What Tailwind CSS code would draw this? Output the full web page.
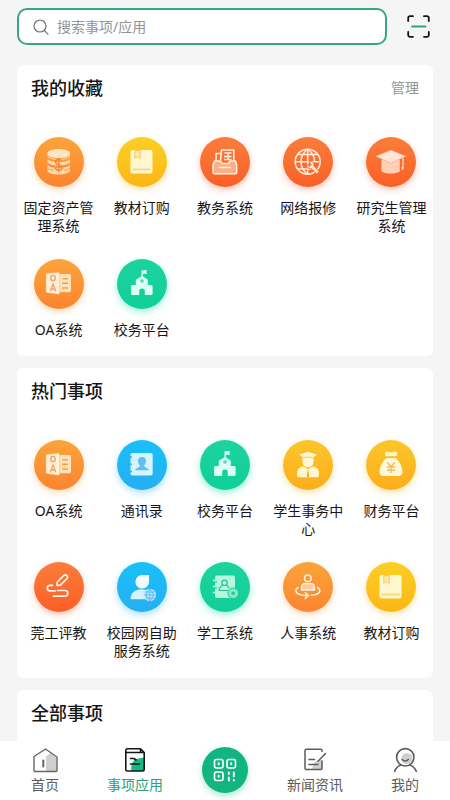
<!DOCTYPE html>
<html lang="zh-CN">
<head>
    <meta charset="UTF-8">
    <meta name="viewport" content="width=device-width, initial-scale=1.0">
    <title>事项应用</title>
    <script src="https://cdn.jsdelivr.net/npm/@tailwindcss/browser@4"></script>
</head>
<body class="flex flex-col min-h-screen bg-[#f5f5f6] text-[#161616] font-['Noto_Sans','Noto_Sans_CJK_SC',sans-serif]">

    <!-- Search bar -->
    <header class="flex items-center justify-between gap-5 pt-2 pb-5 pl-[17px] pr-5">
        <label class="flex flex-1 items-center h-[37px] gap-2 px-[14px] bg-white border-2 border-[#3aa582] rounded-[10px]">
            <svg class="size-4 shrink-0" viewBox="0 0 16 16" fill="none" stroke="#707070" stroke-width="1.2" stroke-linecap="round"><circle cx="7" cy="7" r="6"/><path d="M11.4 11.6 15 15.2"/></svg>
            <input type="search" aria-label="搜索事项/应用" placeholder="搜索事项/应用" class="w-full min-w-0 text-sm outline-none placeholder:text-[#949494]">
        </label>
        <button type="button" aria-label="扫一扫" class="size-[23px] shrink-0">
            <svg viewBox="0 0 23 23" fill="none" stroke="#161616" stroke-width="1.8" stroke-linecap="round"><path d="M6 1.2H3a1.8 1.8 0 0 0-1.8 1.8v3M17 1.2h3A1.8 1.8 0 0 1 21.8 3v3M6 21.8H3A1.8 1.8 0 0 1 1.2 20v-3M17 21.8h3a1.8 1.8 0 0 0 1.8-1.8v-3"/><path d="M5 11.5h13.500" stroke="#2fa37c"/></svg>
        </button>
    </header>

    <main class="flex flex-col flex-1 gap-3 px-[17px]">
        <!-- Favourites -->
        <section class="pt-3 pb-[17px] bg-white rounded-md">
            <div class="flex items-center justify-between px-[14px] mb-[38px]">
                <h2 class="text-lg leading-[22px] font-medium">我的收藏</h2>
                <button type="button" class="text-sm leading-[22px] text-[#949494]">管理</button>
            </div>
            <div class="grid grid-cols-5 gap-y-6 text-sm leading-[18px] text-center">
                <a href="#" class="flex flex-col items-center gap-3 px-1.5">
                    <span class="size-[50px] rounded-full bg-linear-to-b from-[#fba43a] to-[#fb8430] shadow-[0_3px_7px_#fb943055]"><svg viewBox="0 0 50 50"><use href="#icon-coins"/></svg></span>
                    <span>固定资产管理系统</span>
                </a>
                <a href="#" class="flex flex-col items-center gap-3 px-1.5">
                    <span class="size-[50px] rounded-full bg-linear-to-b from-[#fbd025] to-[#fdb514] shadow-[0_3px_7px_#fdb51455]"><svg viewBox="0 0 50 50"><use href="#icon-book"/></svg></span>
                    <span>教材订购</span>
                </a>
                <a href="#" class="flex flex-col items-center gap-3 px-1.5">
                    <span class="size-[50px] rounded-full bg-linear-to-b from-[#fa7d3b] to-[#fb5e26] shadow-[0_3px_7px_#fb5e2655]"><svg viewBox="0 0 50 50"><use href="#icon-drawer"/></svg></span>
                    <span>教务系统</span>
                </a>
                <a href="#" class="flex flex-col items-center gap-3 px-1.5">
                    <span class="size-[50px] rounded-full bg-linear-to-b from-[#fa7d3b] to-[#fb5e26] shadow-[0_3px_7px_#fb5e2655]"><svg viewBox="0 0 50 50"><use href="#icon-network"/></svg></span>
                    <span>网络报修</span>
                </a>
                <a href="#" class="flex flex-col items-center gap-3 px-1.5">
                    <span class="size-[50px] rounded-full bg-linear-to-b from-[#fa7d3b] to-[#fb5e26] shadow-[0_3px_7px_#fb5e2655]"><svg viewBox="0 0 50 50"><use href="#icon-cap"/></svg></span>
                    <span>研究生管理系统</span>
                </a>
                <a href="#" class="flex flex-col items-center gap-3 px-1.5">
                    <span class="size-[50px] rounded-full bg-linear-to-b from-[#fba43a] to-[#fb8430] shadow-[0_3px_7px_#fb943055]"><svg viewBox="0 0 50 50"><use href="#icon-oa"/></svg></span>
                    <span>OA系统</span>
                </a>
                <a href="#" class="flex flex-col items-center gap-3 px-1.5">
                    <span class="size-[50px] rounded-full bg-linear-to-b from-[#1cd3a0] to-[#10cf98] shadow-[0_3px_7px_#10dfa866]"><svg viewBox="0 0 50 50"><use href="#icon-school"/></svg></span>
                    <span>校务平台</span>
                </a>
            </div>
        </section>

        <!-- Popular -->
        <section class="pt-3 pb-[18px] bg-white rounded-md">
            <h2 class="px-[14px] mb-[38px] text-lg leading-[22px] font-medium">热门事项</h2>
            <div class="grid grid-cols-5 gap-y-6 text-sm leading-[18px] text-center">
                <a href="#" class="flex flex-col items-center gap-3 px-1.5">
                    <span class="size-[50px] rounded-full bg-linear-to-b from-[#fba43a] to-[#fb8430] shadow-[0_3px_7px_#fb943055]"><svg viewBox="0 0 50 50"><use href="#icon-oa"/></svg></span>
                    <span>OA系统</span>
                </a>
                <a href="#" class="flex flex-col items-center gap-3 px-1.5">
                    <span class="size-[50px] rounded-full bg-linear-to-b from-[#16c1f8] to-[#27aef0] shadow-[0_3px_7px_#27b8f066]"><svg viewBox="0 0 50 50"><use href="#icon-contacts"/></svg></span>
                    <span>通讯录</span>
                </a>
                <a href="#" class="flex flex-col items-center gap-3 px-1.5">
                    <span class="size-[50px] rounded-full bg-linear-to-b from-[#1cd3a0] to-[#10cf98] shadow-[0_3px_7px_#10dfa866]"><svg viewBox="0 0 50 50"><use href="#icon-school"/></svg></span>
                    <span>校务平台</span>
                </a>
                <a href="#" class="flex flex-col items-center gap-3 px-1.5">
                    <span class="size-[50px] rounded-full bg-linear-to-b from-[#fbc62a] to-[#fdad1c] shadow-[0_3px_7px_#fdb51455]"><svg viewBox="0 0 50 50"><use href="#icon-graduate"/></svg></span>
                    <span>学生事务中心</span>
                </a>
                <a href="#" class="flex flex-col items-center gap-3 px-1.5">
                    <span class="size-[50px] rounded-full bg-linear-to-b from-[#fbc62a] to-[#fdad1c] shadow-[0_3px_7px_#fdb51455]"><svg viewBox="0 0 50 50"><use href="#icon-money"/></svg></span>
                    <span>财务平台</span>
                </a>
                <a href="#" class="flex flex-col items-center gap-3 px-1.5">
                    <span class="size-[50px] rounded-full bg-linear-to-b from-[#fa7d3b] to-[#fb5e26] shadow-[0_3px_7px_#fb5e2655]"><svg viewBox="0 0 50 50"><use href="#icon-pen"/></svg></span>
                    <span>莞工评教</span>
                </a>
                <a href="#" class="flex flex-col items-center gap-3 px-1.5">
                    <span class="size-[50px] rounded-full bg-linear-to-b from-[#16c1f8] to-[#27aef0] shadow-[0_3px_7px_#27b8f066]"><svg viewBox="0 0 50 50"><use href="#icon-netuser"/></svg></span>
                    <span>校园网自助服务系统</span>
                </a>
                <a href="#" class="flex flex-col items-center gap-3 px-1.5">
                    <span class="size-[50px] rounded-full bg-linear-to-b from-[#1cd3a0] to-[#10cf98] shadow-[0_3px_7px_#10dfa866]"><svg viewBox="0 0 50 50"><use href="#icon-student"/></svg></span>
                    <span>学工系统</span>
                </a>
                <a href="#" class="flex flex-col items-center gap-3 px-1.5">
                    <span class="size-[50px] rounded-full bg-linear-to-b from-[#fba43a] to-[#fb8430] shadow-[0_3px_7px_#fb943055]"><svg viewBox="0 0 50 50"><use href="#icon-staff"/></svg></span>
                    <span>人事系统</span>
                </a>
                <a href="#" class="flex flex-col items-center gap-3 px-1.5">
                    <span class="size-[50px] rounded-full bg-linear-to-b from-[#fbd025] to-[#fdb514] shadow-[0_3px_7px_#fdb51455]"><svg viewBox="0 0 50 50"><use href="#icon-book"/></svg></span>
                    <span>教材订购</span>
                </a>
            </div>
        </section>

        <!-- All -->
        <section class="flex-1 pt-3 bg-white rounded-t-md">
            <h2 class="px-[14px] text-lg leading-[22px] font-medium">全部事项</h2>
        </section>
    </main>

    <!-- Tab bar -->
    <nav class="grid grid-cols-5 justify-items-center pt-1.5 pb-1.5 bg-white text-sm leading-[18px] text-[#5c5c5c]">
        <a href="#" class="flex flex-col items-center gap-[3px]">
            <svg class="size-[26px]" viewBox="0 0 26 26" fill="none" stroke="#666" stroke-width="1.4" stroke-linejoin="round" stroke-linecap="round"><path d="M14 24.500V9.500l4.500-3.500 6 5v13.500z" fill="#cfcfcf" stroke="none"/><path d="M2 9.500 13.500 2l11.500 8v13.500a1 1 0 0 1-1 1H3a1 1 0 0 1-1-1z"/><path d="M11.300 13.500v6" stroke-width="2"/></svg>
            <span>首页</span>
        </a>
        <a href="#" aria-current="page" class="flex flex-col items-center gap-[3px] text-[#2c9f78]">
            <svg class="size-[26px]" viewBox="0 0 26 26" fill="none" stroke="#161616" stroke-width="1.6" stroke-linejoin="round" stroke-linecap="round"><path d="M9.500 24c-1-5 1-12 7-12.500 2-.3 4-1 5.500-.5v13z" fill="#15b982" stroke="none"/><path d="M3.800 5.500V3.500A1.800 1.800 0 0 1 5.600 1.800H18.500l3.700 3.700v17a1.500 1.500 0 0 1-1.500 1.500H5.300a1.500 1.500 0 0 1-1.500-1.500zH18M18.500 1.800v3.700h3.700"/><path d="M8.500 11.500h3.500M8.500 17h9M12 11.500l2 1.500"/></svg>
            <span>事项应用</span>
        </a>
        <button type="button" aria-label="二维码" class="flex items-center justify-center size-[46px] rounded-full bg-[#12b580] shadow-[0_3px_6px_#12b58055]">
            <svg class="size-6" viewBox="0 0 24 24" fill="none" stroke="#fff" stroke-width="1.600" stroke-linecap="round"><rect x="1.500" y="1.500" width="8.500" height="8.500" rx="2"/><rect x="14" y="1.500" width="8.500" height="8.500" rx="2"/><rect x="1.500" y="14" width="8.500" height="8.500" rx="2"/><path d="M5.700 5.200v1M18.200 5.200v1M5.700 17.700v1" stroke-width="2"/><path d="M15.800 14.500v1.500M15.800 19.500v3M20.800 14.500v4M20.800 22v.5" stroke-width="1.900"/></svg>
        </button>
        <a href="#" class="flex flex-col items-center gap-[3px]">
            <svg class="size-[26px]" viewBox="0 0 26 26" fill="none" stroke="#5c5c5c" stroke-width="1.500" stroke-linejoin="round" stroke-linecap="round"><path d="M10.500 22.500c0-6 2-9.500 9.500-9.500v9.500z" fill="#cfcfcf" stroke="none"/><path d="M20 4.500V3.500a1.300 1.300 0 0 0-1.300-1.300H4.300A1.300 1.300 0 0 0 3 3.500v17.700a1.300 1.300 0 0 0 1.300 1.300h14.400a1.300 1.300 0 0 0 1.300-1.300V14"/><path d="M23.500 6.500 16 14.300M7 12.500h5.500M7 17.500h9"/></svg>
            <span>新闻资讯</span>
        </a>
        <a href="#" class="flex flex-col items-center gap-[3px]">
            <svg class="size-[26px]" viewBox="0 0 26 26" fill="none" stroke="#5c5c5c" stroke-width="1.600" stroke-linecap="round"><circle cx="15" cy="11.500" r="5.500" fill="#cfcfcf" stroke="none"/><circle cx="13.300" cy="10.300" r="8.700"/><path d="M10.200 12.500c1.500 2 4.500 2 6 0M2.500 24.300c1.500-3.300 4-5.500 6.500-6.300M24.300 24.300c-1.500-3.300-4-5.500-6.500-6.300"/></svg>
            <span>我的</span>
        </a>
    </nav>

    <!-- Icon sprite -->
    <svg class="absolute size-0" aria-hidden="true">
        <symbol id="icon-coins" viewBox="0 0 50 50">
            <path d="M13.500 16c0-2.300 5-4 11.200-4S36 13.700 36 16v3c0 2.300-5 4-11.300 4s-11.200-1.700-11.200-4z" fill="#ffe5bf"/>
            <path d="M13.500 22c1.500 2 6 3 11.200 3S34.500 24 36 22v3.500c-1.500 2-6 3-11.300 3s-9.700-1-11.200-3zM13.500 28c1.500 2 6 3 11.200 3S34.500 30 36 28v6c-1 2-6 3.500-11.300 3.500S14.500 36 13.500 34z" fill="#ffd9ac"/>
            <path d="M13.500 18.500c2 2 6 3.300 11.200 3.300S34 20.500 36 18.500M13.500 31c1 1.300 4 2 6 2.300M36 31c-1 1.300-4 2-6 2.300" fill="none" stroke="#fa9848"/>
            <path d="M28 24.300c-.5-1.500-1.800-2-3.200-2-2 0-3.300 1-3.300 2.700 0 4 6.700 1.800 6.700 5.500 0 1.700-1.500 2.800-3.500 2.800-1.700 0-3-.7-3.500-2.300M24.800 20.800v14" fill="none" stroke="#f58a38" stroke-width="1.500"/>
        </symbol>
        <symbol id="icon-book" viewBox="0 0 50 50">
            <path d="M16 13h17.500a2 2 0 0 1 2 2v19.500a2 2 0 0 1-2 2h-18a2 2 0 0 1-2-2v-19A2.500 2.500 0 0 1 16 13z" fill="#fff8cf"/>
            <path d="M17.800 13.500h5.400v8l-2.700-2.200-2.700 2.200z" fill="#ffe9a0" stroke="#f6c968"/>
            <path d="M15.500 32.500h18.500" stroke="#f9d580" stroke-width="1.800"/>
        </symbol>
        <symbol id="icon-drawer" viewBox="0 0 50 50">
            <g fill="none" stroke="#fff0e4" stroke-width="1.500" stroke-linejoin="round">
                <path d="M20.500 23.500 21.500 13h12.300v11M16 24v-7.500h5"/>
                <path d="M24.500 16h7M24 19.500h7.500M24 22.500h7.500M28 16v7"/>
                <path d="M14.500 24h6l1.500 2.500h6.500l1.500-2.500h5.500l1.200 4v7.200a1.600 1.600 0 0 1-1.600 1.600H14.600a1.600 1.600 0 0 1-1.600-1.600V28z" fill="#fcae86"/>
                <path d="M18.500 30.500H31"/>
            </g>
        </symbol>
        <symbol id="icon-network" viewBox="0 0 50 50">
            <g fill="none" stroke="#ffeddc" stroke-width="1.500">
                <circle cx="24.700" cy="24.700" r="12.500"/>
                <path d="M24.700 12v25.500M12.500 24.700H37M14.500 17.500h20.400M14.500 32h14M24.700 12c-9 7-9 18.500 0 25.500M24.700 12c5 4 7 8 6.800 12"/>
            </g>
            <path d="M25.800 24.500c3-.7 5.600 1.300 5 4.300l5.300 5.700-2.300 2.500-5.500-5.500c-2.500.6-5-1.500-4.300-4.300l2.500 2.200 1.700-1.800z" fill="#ffe0cc" stroke="#fb6e34" stroke-width=".8"/>
        </symbol>
        <symbol id="icon-cap" viewBox="0 0 50 50">
            <path d="M15.500 22.500h18.300v12c-5 2.700-13.300 2.700-18.300 0z" fill="#ffd0b6"/>
            <path d="M9.500 19.300 25 13l15 6.300-15.300 6.900z" fill="#ffe7d8" stroke="#fb9365" stroke-width=".5"/>
            <path d="M37 20.800v11M36.300 30v3" stroke="#ffe0cf" stroke-width="1.200"/>
        </symbol>
        <symbol id="icon-oa" viewBox="0 0 50 50">
            <path d="M24 15h11.200a1.800 1.800 0 0 1 1.800 1.800v14.700a1.800 1.800 0 0 1-1.800 1.800H24z" fill="#ffe3bd"/>
            <path d="M13.200 14.300 24 13.200a1.500 1.500 0 0 1 1.700 1.500v19a1.500 1.500 0 0 1-1.700 1.500l-10.800-1.400a1.500 1.500 0 0 1-1.300-1.500V15.800a1.500 1.500 0 0 1 1.300-1.500z" fill="#fff0da" stroke="#fca94f" stroke-width=".5"/>
            <path d="M28.500 19.700H34M28 24.300h6M28 28.900h6" stroke="#fb9d45" stroke-width="1.500"/>
            <g fill="none" stroke="#f5a05b" stroke-width="1.300"><ellipse cx="19" cy="19" rx="2.300" ry="2.700"/><path d="m16.200 32.300 2.800-7.300 2.800 7.300M17.200 30h3.600"/></g>
        </symbol>
        <symbol id="icon-school" viewBox="0 0 50 50">
            <path d="M24.500 11.200h5.700l-1 1.700 1 1.800h-4.400v2.500l5 3.500v5.200h3.300a1.500 1.500 0 0 1 1.500 1.500v7.200a1.500 1.500 0 0 1-1.500 1.500h-6.300v-3.700a2.800 2.800 0 0 0-5.600 0v3.700h-6.700a1.500 1.500 0 0 1-1.500-1.500v-7.200a1.500 1.500 0 0 1 1.500-1.500h3.300v-5.200l5.700-3.500z" fill="#dcfff5"/>
            <circle cx="25" cy="22" r="1.800" fill="#54d9b8"/>
        </symbol>
        <symbol id="icon-contacts" viewBox="0 0 50 50">
            <rect x="13.500" y="13" width="22.200" height="22.500" rx="2" fill="#d5f4ff"/>
            <path d="M12.500 17h2.500M12.500 24.200h2.500M12.500 31.500h2.500" stroke="#27b7f3" stroke-width="1.500"/>
            <path d="M25 17c2.800 0 4.200 2 4 4.200-.1 1.800-1 3.300-2 4.300.2 2.300 4 2 5 4.700H18c1-2.700 4.800-2.400 5-4.700-1-1-1.900-2.500-2-4.300-.2-2.200 1.200-4.200 4-4.200z" fill="#64bfe9"/>
        </symbol>
        <symbol id="icon-graduate" viewBox="0 0 50 50">
            <path d="M15.700 14.800 25 11.800l9.300 3-3.800 1.900v5c0 3.300-2.500 5.600-5.500 5.600s-5.500-2.300-5.500-5.600v-5z" fill="#fff7d6"/>
            <path d="M19.500 18.200c2.500-1.500 8.500-1.500 11 0M16.800 15.500v4" fill="none" stroke="#f8bd4a" stroke-width=".9"/>
            <path d="m20 26.200 5 3 5-3c4 .8 6 3.500 6 7.600v1.700a1.700 1.700 0 0 1-1.700 1.700H15.700a1.700 1.700 0 0 1-1.700-1.700v-1.700c0-4.100 2-6.800 6-7.600z" fill="#fff5ce"/>
            <path d="m25 29-1.300 7.800h2.600z" fill="#f1a724"/>
        </symbol>
        <symbol id="icon-money" viewBox="0 0 50 50">
            <path d="M20 16.300c-2-2-1.300-4.800 1.300-4.800 1.400 0 2.300.8 3.700.8s2.500-.8 4-.8c2.700 0 3.200 2.800 1.200 4.800z" fill="#fff3c4"/>
            <path d="M20.500 18h9c4 3 7 9 7 14.300 0 2.400-1.400 3.700-4 3.700h-15c-2.600 0-4-1.300-4-3.700C13.500 27 16.500 21 20.500 18z" fill="#fff8d6"/>
            <path d="m21.300 22.500 3.700 4.300 3.700-4.300M25 26.800V33M20.800 27h8.400M20.800 30h8.400" fill="none" stroke="#efbb5b" stroke-width="1.400"/>
        </symbol>
        <symbol id="icon-pen" viewBox="0 0 50 50">
            <g fill="none" stroke="#fff3ea" stroke-width="1.700" stroke-linecap="round" stroke-linejoin="round">
                <path d="m22.800 23.300.5-3.300 6.500-6.400a2.200 2.200 0 0 1 3.200 3l-6.700 6.500z"/>
                <path d="M18.500 23.300h-3a2.800 2.800 0 0 0 0 5.500h5.800M23.500 28.500H31a2.800 2.800 0 0 1 0 5.600H19.500"/>
            </g>
        </symbol>
        <symbol id="icon-netuser" viewBox="0 0 50 50">
            <path d="M25.200 13H32v6.500a6.800 6.800 0 1 1-6.800-6.500z" fill="#edfbff"/>
            <path d="M13.500 37.300c0-6.300 4.500-10 11-10 3 0 5 .7 6.500 2l-3 8z" fill="#d3f3ff"/>
            <circle cx="32.800" cy="33" r="6.200" fill="#bfeafb"/>
            <path d="M32.800 27v12M26.800 33h12M28 30h9.600M28 36h9.600M32.800 27c-4.500 3.500-4.500 8.500 0 12 4.500-3.500 4.500-8.500 0-12z" fill="none" stroke="#45b6ec" stroke-width=".8"/>
        </symbol>
        <symbol id="icon-student" viewBox="0 0 50 50">
            <rect x="15" y="13.500" width="20" height="22.500" rx="2" fill="#b5f7df"/>
            <path d="M12.800 18.500h4M12.800 24.500h4M12.800 30.500h4" stroke="#b5f7df" stroke-width="1.400"/>
            <path d="M14.800 19.800h2.500M14.800 25.800h2.500" stroke="#18cb98"/>
            <g fill="none" stroke="#28bd94" stroke-width="1.200"><circle cx="24.500" cy="20.800" r="2.700"/><path d="M22.800 23.300c-2.500 1-3.500 2.700-3.500 5.200h9M26.200 23.300c1.500.6 2.500 1.500 3 2.700"/></g>
            <circle cx="33.200" cy="31.300" r="5.300" fill="#8be8cc" stroke="#18cb98"/>
            <circle cx="33.200" cy="31.300" r="1.800" fill="#26c79c"/>
        </symbol>
        <symbol id="icon-staff" viewBox="0 0 50 50">
            <g fill="none" stroke="#fff1df" stroke-width="1.500" stroke-linecap="round" stroke-linejoin="round">
                <circle cx="24.800" cy="16.300" r="3.300"/>
                <path d="M18.500 28v-2c0-3 2-4.500 4.500-4.500h4c2.500 0 4.500 1.500 4.500 4.500v2z" fill="#ffcb9d"/>
                <path d="M15.200 25.500c-3.500 1.800-3.300 5.800 2.300 7.200 2 .5 4.500.8 7 .7M34.500 25.500c3.500 1.800 3.300 5.800-2.300 7.200-1.500.4-2.700.5-4 .6M22.300 30.700l3.200 2.700-3.200 3"/>
            </g>
        </symbol>
    </svg>
</body>
</html>
